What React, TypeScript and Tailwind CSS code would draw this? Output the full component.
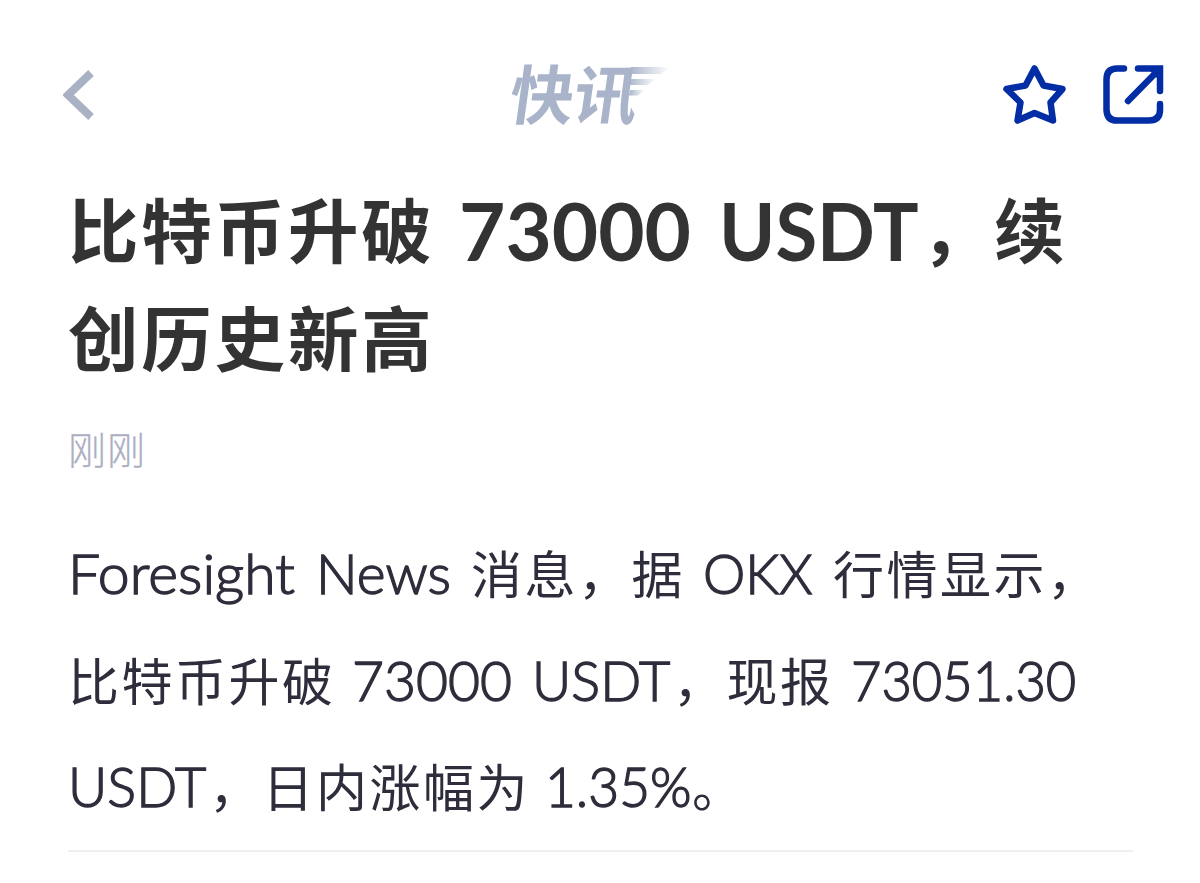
import type { ReactNode } from 'react';

const cjk = "font-['Noto_Sans_CJK_SC',sans-serif]";
const latin = "origin-left tracking-normal font-['Lato','Noto_Sans_CJK_SC',sans-serif]";
const bodyLatin = 'mt-px text-[56px] font-light [-webkit-text-stroke:1.400px_#2d2d3b] ' + latin;

function Run({ className, children }: { className: string; children: ReactNode }) {
    return <span className={'block shrink-0 whitespace-pre ' + className}>{children}</span>;
}

function Header() {
    return (
        <header className="flex h-[168px] items-start pl-[63px] pr-[36px] pt-[64px]">
            <button className="mt-[6px] h-[50px] w-[32px]">
                <svg width="32" height="50" viewBox="0 0 32 50" fill="none">
                    <path d="M28 3L5 25L28 47" stroke="#a9b1c5" strokeWidth="8" />
                </svg>
            </button>

            <div className="ml-[411px] flex h-[62px] w-[164px]">
                <span
                    className={
                        'block w-[128px] shrink-0 origin-bottom -skew-x-[8deg] whitespace-pre text-[64px] leading-[55px] font-bold text-[#a9b4ca] ' +
                        cjk
                    }
                >
                    快讯
                </span>
                <svg className="-ml-[5px] mt-[3px] shrink-0" width="41" height="30" viewBox="0 0 41 30">
                    <defs>
                        <linearGradient id="speed" x1="0" x2="1" y1="0" y2="0">
                            <stop offset="0" stopColor="#a9b4ca" />
                            <stop offset="1" stopColor="#a9b4ca" stopOpacity="0" />
                        </linearGradient>
                    </defs>
                    <path d="M2 0H41L32 7H1Z" fill="url(#speed)" />
                    <path d="M1 12H27L19 18H0Z" fill="url(#speed)" />
                    <path d="M1 23H16L9 28.500H0Z" fill="url(#speed)" />
                </svg>
            </div>

            <div className="ml-auto flex gap-[36px]">
                <svg width="64" height="62" viewBox="0 0 64 62" fill="none">
                    <path
                        d="M32.500 4.500L41.500 21.500L60.500 25L48.500 38.500L51 56.500L32.500 49L15.500 56.500L18.500 38.500L4.500 25L23.500 21.500Z"
                        stroke="#022da5"
                        strokeWidth="6.5"
                        strokeLinejoin="round"
                    />
                </svg>
                <svg width="62" height="62" viewBox="0 0 62 62" fill="none">
                    <path
                        d="M22 4.500H15Q4.500 4.500 4.500 15.500V46Q5 56.500 15 56.500H47Q58 56.500 58 46V40"
                        stroke="#022da5"
                        strokeWidth="6.5"
                        strokeLinecap="round"
                    />
                    <path d="M36 4.500H58V27" stroke="#022da5" strokeWidth="6.5" strokeLinecap="round" />
                    <path d="M26 37L57 5.500" stroke="#022da5" strokeWidth="6.5" strokeLinecap="round" />
                    <path d="M47 6H57V16Z" fill="#022da5" />
                </svg>
            </div>
        </header>
    );
}

export default function App() {
    return (
        <div className="h-[883px] w-[1200px] overflow-hidden bg-white">
            <Header />

            <main className="pl-[68px] pr-[67px] pt-[5px]">
                <h1
                    className={
                        'text-[70.500px] leading-[108px] font-bold tracking-[2.800px] text-[#333333] ' + cjk
                    }
                >
                    <span className="flex h-[108px]">
                        <Run className="w-[391px]">比特币升破 </Run>
                        <Run className={'mt-[3px] w-[260px] text-[80px] ' + latin}>73000 </Run>
                        <Run className={'mt-[3px] w-[202px] scale-x-[0.95] text-[80px] ' + latin}>USDT</Run>
                        <Run className="w-[147px]">，续</Run>
                    </span>
                    <span className="flex h-[108px]">
                        <Run className="w-[391px]">创历史新高</Run>
                    </span>
                </h1>

                <p
                    className={
                        'mt-[29px] h-[60px] text-[38px] leading-[60px] font-light tracking-[1px] text-[#adafc3] [-webkit-text-stroke:0.300px_#adafc3] ' +
                        cjk
                    }
                >
                    刚刚
                </p>

                <div
                    className={
                        'mt-[41px] text-[51px] leading-[106.500px] font-normal tracking-[2.500px] text-[#2d2d3b] ' + cjk
                    }
                >
                    <p className="flex h-[106.500px]">
                        <Run className={'w-[248px] scale-x-[1.020] ' + bodyLatin}>Foresight </Run>
                        <Run className={'w-[155px] scale-x-[0.985] ' + bodyLatin}>News </Run>
                        <Run className="w-[232px]">消息，据 </Run>
                        <Run className={'w-[130px] scale-x-[0.955] ' + bodyLatin}>OKX </Run>
                        <Run className="w-[270px]">行情显示，</Run>
                    </p>
                    <p className="flex h-[106.500px]">
                        <Run className="w-[284px]">比特币升破 </Run>
                        <Run className={'w-[180px] scale-x-[0.985] ' + bodyLatin}>73000 </Run>
                        <Run className={'w-[141px] scale-x-[0.965] ' + bodyLatin}>USDT</Run>
                        <Run className="w-[178px]">，现报 </Run>
                        <Run className={'w-[230px] scale-x-[0.937] ' + bodyLatin}>73051.30</Run>
                    </p>
                    <p className="flex h-[106.500px]">
                        <Run className={'w-[141px] scale-x-[0.965] ' + bodyLatin}>USDT</Run>
                        <Run className="w-[336px]">，日内涨幅为 </Run>
                        <Run className={'w-[147px] scale-x-[0.950] ' + bodyLatin}>1.35%</Run>
                        <Run className="w-[54px]">。</Run>
                    </p>
                </div>

                <div className="mt-[11px] h-[2px] bg-[#efeff0]" />
            </main>
        </div>
    );
}
